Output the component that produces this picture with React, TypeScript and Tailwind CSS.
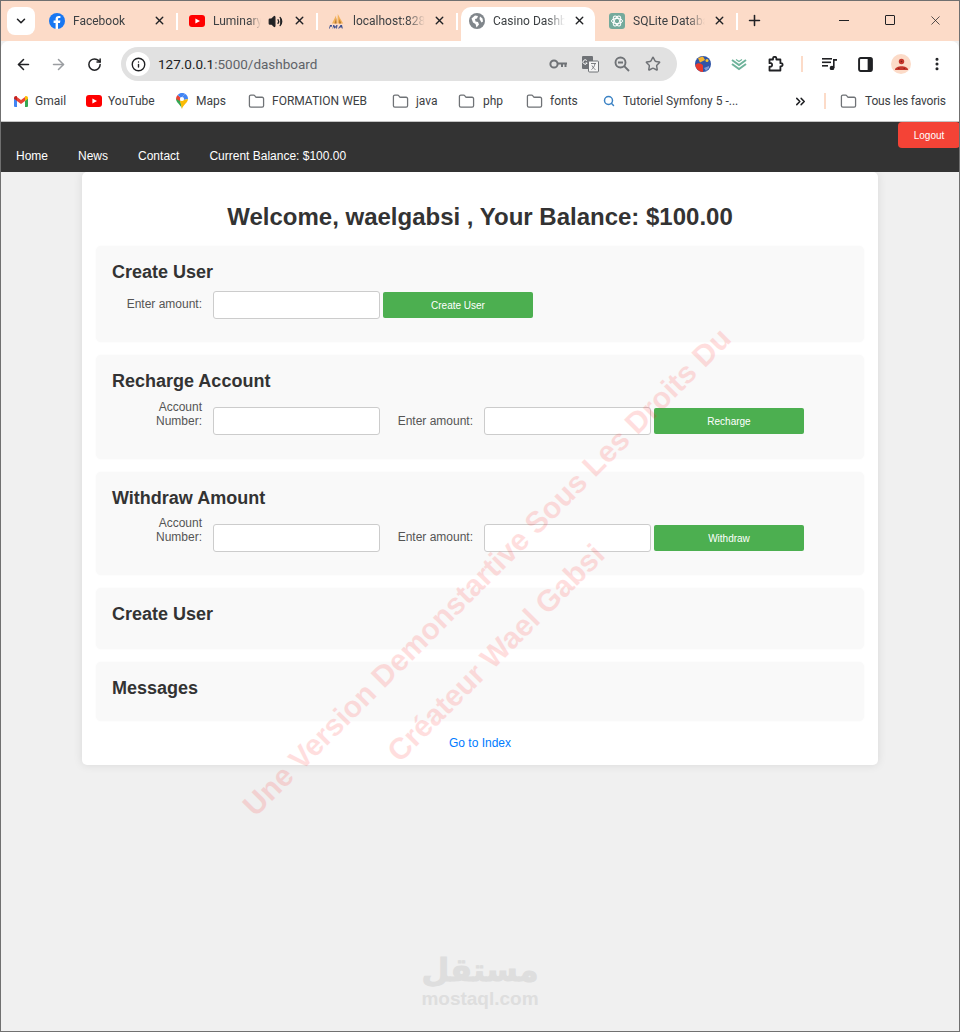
import {
  ArrowLeft,
  ArrowRight,
  ChevronDown,
  ChevronsRight,
  Folder,
  Info,
  MoreVertical,
  Plus,
  RotateCw,
  Search,
  Star,
  Volume2,
  X,
} from 'lucide-react';
import type { ReactNode } from 'react';

const FacebookIcon = () => (
  <svg viewBox="0 0 16 16" className="w-4 h-4 shrink-0">
    <circle cx="8" cy="8" r="8" fill="#1877f2" />
    <path d="M9 16V10h2l.4-2.4H9V6.3c0-.8.3-1.2 1.3-1.2h1.1V3c-.5-.1-1.2-.1-1.8-.1-1.900 0-3 1.100-3 3.100v1.600H4.600V10H6.600v6z" fill="#fff" />
  </svg>
);

const YoutubeIcon = () => (
  <svg viewBox="0 0 16 12" className="w-4 h-3 shrink-0">
    <rect width="16" height="12" rx="3" fill="#ff0000" />
    <path d="M6.400 3.400v5.200L11 6z" fill="#fff" />
  </svg>
);

const PmaIcon = () => (
  <svg viewBox="0 0 16 16" className="w-4 h-4 shrink-0">
    <path d="M3 10.500 7 2.500l.6 8zM8.400 10.500 8.800 1l2.400 4.500 3 5z" fill="#f2b15a" />
    <path d="M5.500 10.500 7.300 5l.3 5.500zM10 10.500l.5-4.500 1.800 4.500z" fill="#b5772d" />
    <path d="M0 15.500 1 12h2l-.2 1.800H1.200l-.2 1.700zM3.500 15.500 4.200 12h1l.9 1.800L7.500 12h1l-.5 3.500H7l.3-2-1.300 2h-.6l-1-2-.3 2zM9 15.500 11.500 12h1.500l.8 3.500h-1l-.2-.9h-1.700l-.7.9z" fill="#3d4f8f" />
  </svg>
);

const GlobeIcon = () => (
  <svg viewBox="0 0 16 16" className="w-4 h-4 shrink-0">
    <circle cx="8" cy="8" r="8" fill="#80868b" />
    <path d="M2.500 5.500 6 2.500l3 .5-1 2.500-2 .5.500 2.500L9 9l1 2.500-2.500 3L6.500 11 4 9.500zM11 3.500l2.500 2 .5 3-1.500 1-2-3.500z" fill="#fff" />
  </svg>
);

const ChatGptIcon = () => (
  <svg viewBox="0 0 16 16" className="w-4 h-4 shrink-0">
    <rect width="16" height="16" rx="3" fill="#74aa9c" />
    <g fill="none" stroke="#fff" strokeWidth="1">
      <ellipse cx="8" cy="8" rx="5.500" ry="2.600" />
      <ellipse cx="8" cy="8" rx="5.500" ry="2.600" transform="rotate(60 8 8)" />
      <ellipse cx="8" cy="8" rx="5.500" ry="2.600" transform="rotate(120 8 8)" />
    </g>
  </svg>
);

const GmailIcon = () => (
  <svg viewBox="0 0 14 11" className="w-[14px] h-[11px] shrink-0">
    <path d="M0 2v8a1 1 0 0 0 1 1h2V4.500z" fill="#4285f4" />
    <path d="M14 2v8a1 1 0 0 1-1 1h-2V4.500z" fill="#34a853" />
    <path d="M3 5V1L7 4l4-3v4L7 8z" fill="#ea4335" />
    <path d="M0 2c0-1.600 1.800-2.500 3-1.500V5L0 2.700z" fill="#c5221f" />
    <path d="M14 2c0-1.600-1.800-2.500-3-1.500V5l3-2.300z" fill="#fbbc04" />
  </svg>
);

const MapsIcon = () => (
  <svg viewBox="0 0 12 16" className="w-3 h-4 shrink-0">
    <path d="M6 16C5 12 0 9.500 0 6h4z" fill="#34a853" />
    <path d="M0 6c0-1.600.6-3 1.700-4.100L5 5 4 8z" fill="#ea4335" />
    <path d="M1.700 1.900A6 6 0 0 1 9 .800L5 5z" fill="#4285f4" />
    <path d="M9 .800A6 6 0 0 1 12 6L7.500 7 5 5z" fill="#4285f4" />
    <path d="M12 6c0 3.500-5 6-6 10L4 8l3.500-1z" fill="#fbbc04" />
    <circle cx="6" cy="6" r="2.100" fill="#fff" />
  </svg>
);

const KeyIcon = () => (
  <svg viewBox="0 0 18 12" className="w-[18px] h-3 shrink-0" fill="none" stroke="#6f7276" strokeWidth="2">
    <circle cx="5" cy="6" r="3.600" />
    <path d="M8.500 5.500H18M13 5.500V9M16.500 5.500V9" />
  </svg>
);

const TranslateIcon = () => (
  <svg viewBox="0 0 17 17" className="w-[17px] h-[17px] shrink-0">
    <rect x="0" y="0" width="11" height="13" rx="1" fill="#6f7276" />
    <rect x="6.500" y="5" width="10" height="11" rx="1" fill="#f5f5f5" stroke="#6f7276" />
    <path d="M4.800 4.500a2.200 2.200 0 1 0 .4 2.500H3.500" fill="none" stroke="#fff" strokeWidth="1" />
    <path d="M9 7.500h5M13 7.500c-.5 3-2 5-3.500 6M10 9.500c.7 1.800 2 3.300 3.500 4" fill="none" stroke="#6f7276" strokeWidth=".9" />
  </svg>
);

const ZoomIcon = () => (
  <svg viewBox="0 0 16 16" className="w-4 h-4 shrink-0" fill="none" stroke="#6f7276" strokeWidth="1.900">
    <circle cx="6.500" cy="6.500" r="5" />
    <path d="M4 6.500h5M10.200 10.200 15 15" />
  </svg>
);

const ExtensionIcon = () => (
  <svg viewBox="0 0 16 16" className="w-4 h-4 shrink-0">
    <circle cx="8" cy="8" r="8" fill="#2f55a8" />
    <path d="M.3 9c2-2.500 5.700-2.500 7.700.5V16a8 8 0 0 1-7.700-7z" fill="#e8382c" />
    <path d="M3 2 8 .5 10 4 5 6.500z" fill="#f4b430" />
    <circle cx="12" cy="4.500" r="1.500" fill="#f4c430" />
    <path d="M9 12l5-2v2l-3 3z" fill="#7a9ad8" />
  </svg>
);

const ChevronsExtIcon = () => (
  <svg viewBox="0 0 16 13" className="w-4 h-[13px] shrink-0" fill="none" stroke="#6fb39b" strokeWidth="2">
    <path d="m1 2 7 5 7-5" />
    <path d="m1 6 7 5 7-5" />
    <path d="M5 1.500 8 3.500l3-2" strokeWidth="1.200" />
  </svg>
);

const PuzzleIcon = () => (
  <svg viewBox="0 0 16 16" className="w-4 h-4 shrink-0" fill="none" stroke="#202124" strokeWidth="1.800" strokeLinejoin="round">
    <path d="M1.500 3.500H5V2.500a1.700 1.700 0 0 1 3.400 0v1h4v3.700h.6a1.600 1.600 0 0 1 0 3.200h-.6v4.100H1.500v-3.800H3a1.900 1.900 0 0 0 0-3.500H1.500z" />
  </svg>
);

const QueueIcon = () => (
  <svg viewBox="0 0 15 12" className="w-[15px] h-3 shrink-0" fill="#202124">
    <rect x="0" y="0" width="10" height="1.600" />
    <rect x="0" y="3.500" width="9" height="1.600" />
    <rect x="0" y="7" width="6" height="1.600" />
    <rect x="11" y="1" width="1.600" height="9" />
    <rect x="11" y="1" width="4" height="1.800" />
    <circle cx="10" cy="10" r="2.300" />
  </svg>
);

const SidePanelIcon = () => (
  <svg viewBox="0 0 14 14" className="w-[15px] h-[15px] shrink-0">
    <rect x="1" y="1" width="12" height="12" rx="1.500" fill="#fff" stroke="#202124" strokeWidth="1.800" />
    <rect x="9" y="1" width="4" height="12" fill="#202124" />
  </svg>
);

const AvatarIcon = () => (
  <div className="w-5 h-5 rounded-full bg-[#fcdbc8] flex items-center justify-center shrink-0">
    <svg viewBox="0 0 12 12" className="w-[13px] h-[13px]">
      <circle cx="6" cy="3.200" r="2.500" fill="#c5372c" />
      <path d="M0 11c0-2.500 3-3.500 6-3.500s6 1 6 3.500z" fill="#c5372c" />
      <circle cx="6" cy="3.200" r=".7" fill="#7a1f18" />
      <circle cx="3.500" cy="9.500" r=".6" fill="#7a1f18" />
      <circle cx="8.500" cy="9.500" r=".6" fill="#7a1f18" />
    </svg>
  </div>
);

type TabItem = { title: string; icon: ReactNode; active?: boolean; sound?: boolean };

const tabs: TabItem[] = [
  { title: 'Facebook', icon: <FacebookIcon /> },
  { title: 'Luminary', icon: <YoutubeIcon />, sound: true },
  { title: 'localhost:8282', icon: <PmaIcon /> },
  { title: 'Casino Dashboard', icon: <GlobeIcon />, active: true },
  { title: 'SQLite Database', icon: <ChatGptIcon /> },
];

const folderIcon = <Folder size={17} strokeWidth={1.8} className="text-[#6f7276] shrink-0" />;

const bookmarks = [
  { label: 'Gmail', icon: <GmailIcon />, width: 'w-[72px]', gap: 'gap-[7px]' },
  { label: 'YouTube', icon: <YoutubeIcon />, width: 'w-[90px]', gap: 'gap-[6px]' },
  { label: 'Maps', icon: <MapsIcon />, width: 'w-[72px]', gap: 'gap-[8px]' },
  { label: 'FORMATION WEB', icon: folderIcon, width: 'w-[144px]', gap: 'gap-[7px]' },
  { label: 'java', icon: folderIcon, width: 'w-[66px]', gap: 'gap-[7px]' },
  { label: 'php', icon: folderIcon, width: 'w-[68px]', gap: 'gap-[8px]' },
  { label: 'fonts', icon: folderIcon, width: 'w-[77px]', gap: 'gap-[7px]' },
  { label: 'Tutoriel Symfony 5 -...', icon: <Search size={12} strokeWidth={3} className="text-[#3b82c4] shrink-0" />, width: 'w-[190px]', gap: 'gap-[8px]' },
];

const Tab = ({ tab }: { tab: TabItem }) => (
  <div className="relative w-[140px] h-[34px] shrink-0 pl-[12px]">
    {tab.active && <div className="absolute left-[4px] right-[2px] top-0 bottom-0 bg-white rounded-t-[10px]" />}
    <div className="relative flex items-center gap-[8px] w-[120px] h-[28px]">
      {tab.icon}
      <span className={`text-[12px] text-[#3c4043] whitespace-nowrap overflow-hidden [mask-image:linear-gradient(to_right,black_75%,transparent)] ${tab.sound ? 'w-[48px]' : 'w-[72px]'}`}>
        {tab.title}
      </span>
      {tab.sound && <Volume2 size={15} fill="#202124" className="text-[#202124] shrink-0 ml-[-1px]" />}
    </div>
    <X size={13} strokeWidth={2.6} className="absolute left-[116px] top-[7px] text-[#202124]" />
    {!tab.active && <div className="absolute right-[-1px] top-[6px] w-[2px] h-[17px] bg-white" />}
  </div>
);

const ChromeBar = () => (
  <div className="shrink-0 font-['Roboto',sans-serif]">
    {/* tabs */}
    <div className="h-[40px] bg-[#fcdbc8] flex items-start pt-[6px] pl-[6px]">
      <div className="w-[28px] h-[28px] bg-white rounded-[8px] flex items-center justify-center shrink-0 mr-[2px]">
        <ChevronDown size={14} strokeWidth={2.6} className="text-[#202124]" />
      </div>
      {tabs.map((tab) => (
        <Tab key={tab.title} tab={tab} />
      ))}
      <Plus size={17} strokeWidth={2.2} className="text-[#202124] mt-[5px] ml-[9px] shrink-0" />
      <div className="flex ml-auto items-center h-[28px] mt-[-1px] text-[#202124]">
        <div className="w-[10px] h-[1px] bg-[#202124] mr-[36px]" />
        <div className="w-[10px] h-[10px] border border-[#202124] rounded-[1px] mr-[33px]" />
        <X size={15} strokeWidth={1.2} className="mr-[16px]" />
      </div>
    </div>
    {/* toolbar */}
    <div className="h-[40px] bg-white rounded-t-[8px] flex items-start pt-[6px] text-[#202124]">
      <div className="h-[34px] flex items-center">
        <ArrowLeft size={17} strokeWidth={2.2} className="ml-[14px] shrink-0" />
        <ArrowRight size={17} strokeWidth={2.2} className="ml-[18px] text-[#9a9da1] shrink-0" />
        <RotateCw size={15} strokeWidth={2.4} className="ml-[20px] shrink-0" />
      </div>
      <div className="ml-[19px] w-[556px] h-[34px] bg-[#e1e1e1] rounded-full flex items-center shrink-0">
        <div className="w-[24px] h-[24px] ml-[5px] bg-white rounded-full flex items-center justify-center shrink-0">
          <Info size={15} strokeWidth={2.2} />
        </div>
        <span className="ml-[8px] text-[13.5px] text-[#5f6368] whitespace-nowrap">
          <span className="text-[#202124]">127.0.0.1</span>:5000/dashboard
        </span>
        <div className="ml-auto flex items-center gap-[15px] pr-[16px] text-[#6f7276]">
          <KeyIcon />
          <TranslateIcon />
          <ZoomIcon />
          <Star size={16} strokeWidth={2.2} />
        </div>
      </div>
      <div className="ml-[18px] h-[34px] flex items-center">
        <ExtensionIcon />
        <div className="ml-[20px]"><ChevronsExtIcon /></div>
        <div className="ml-[21px]"><PuzzleIcon /></div>
        <div className="ml-[17px] w-[2px] h-[16px] bg-[#fcdbc8]" />
        <div className="ml-[19px]"><QueueIcon /></div>
        <div className="ml-[21px]"><SidePanelIcon /></div>
        <div className="ml-[18px]"><AvatarIcon /></div>
        <MoreVertical size={16} strokeWidth={2.6} className="ml-[18px]" />
      </div>
    </div>
    {/* bookmarks */}
    <div className="h-[41px] bg-white border-b border-[#c4c4c4] flex items-center pl-[13px] text-[12px] text-[#3c4043]">
      {bookmarks.map((b) => (
        <div key={b.label} className={`flex items-center shrink-0 whitespace-nowrap ${b.width} ${b.gap}`}>
          {b.icon}
          <span>{b.label}</span>
        </div>
      ))}
      <ChevronsRight size={15} strokeWidth={2.4} className="text-[#202124] shrink-0" />
      <div className="ml-[16px] w-[2px] h-[16px] bg-[#fcdbc8] shrink-0" />
      <Folder size={17} strokeWidth={1.8} className="text-[#6f7276] ml-[14px] shrink-0" />
      <span className="ml-[8px] whitespace-nowrap tracking-[-0.2px]">Tous les favoris</span>
    </div>
  </div>
);

const Section = ({ title, className, children }: { title: string; className: string; children?: ReactNode }) => (
  <section className={`bg-[#f9f9f9] rounded-[5px] shadow-[0_0_2px_rgba(0,0,0,0.04)] px-[16px] pt-[16px] ${className}`}>
    <h2 className="text-[18px] leading-[21px] font-bold text-[#333333]">{title}</h2>
    {children}
  </section>
);

const Field = ({ label, className }: { label: ReactNode; className?: string }) => (
  <>
    <label className={`w-[90px] mr-[8px] text-right text-[12px] leading-[14px] text-[#555555] shrink-0 ${className ?? ''}`}>{label}</label>
    <input type="text" className="w-[167px] h-[28px] bg-white border border-[#cccccc] rounded-[3px] shrink-0" />
  </>
);

const GreenButton = ({ children }: { children: string }) => (
  <button className="w-[150px] h-[26px] bg-[#4caf50] text-white text-[10px] rounded-[2px] shrink-0">{children}</button>
);

const AccountLabel = () => (
  <>
    Account
    <br />
    Number:
  </>
);

export default function App() {
  return (
    <div className="relative w-[960px] h-[1032px] overflow-hidden border border-[#707070] bg-[#f0f0f0] font-['Liberation_Sans',Arial,sans-serif]">
      <ChromeBar />

      <nav className="relative h-[50px] bg-[#333333] flex items-end text-[12px] text-white pb-[7px] pl-[15px]">
        <a className="mr-[30px]">Home</a>
        <a className="mr-[30px]">News</a>
        <a className="mr-[30px]">Contact</a>
        <a>Current Balance: $100.00</a>
        <button className="absolute right-[-1px] top-0 w-[62px] h-[26px] bg-[#f44336] rounded-[4px] text-[10px] text-white">Logout</button>
      </nav>

      <main className="ml-[81px] w-[796px] h-[593px] bg-white rounded-[5px] shadow-[0_0_10px_rgba(0,0,0,0.1)] px-[14px]">
        <h1 className="pt-[31px] pb-[15px] text-center text-[24px] leading-[28px] font-bold text-[#333333]">
          Welcome, waelgabsi , Your Balance: $100.00
        </h1>
        <div className="flex flex-col gap-[13px]">
          <Section title="Create User" className="h-[96px]">
            <div className="flex items-center mt-[8px] gap-[3px]">
              <Field label="Enter amount:" className="mb-[2px]" />
              <GreenButton>Create User</GreenButton>
            </div>
          </Section>
          <Section title="Recharge Account" className="h-[104px]">
            <div className="flex items-center mt-[15px] gap-[3px]">
              <Field label={<AccountLabel />} className="mt-[-14px]" />
              <Field label="Enter amount:" />
              <GreenButton>Recharge</GreenButton>
            </div>
          </Section>
          <Section title="Withdraw Amount" className="h-[103px]">
            <div className="flex items-center mt-[15px] gap-[3px]">
              <Field label={<AccountLabel />} className="mt-[-16px]" />
              <Field label="Enter amount:" className="mb-[2px]" />
              <GreenButton>Withdraw</GreenButton>
            </div>
          </Section>
          <Section title="Create User" className="h-[61px]" />
          <Section title="Messages" className="h-[59px]" />
        </div>
        <div className="mt-[15px] text-center text-[12px] leading-[14px] text-[#007bff]">
          <a>Go to Index</a>
        </div>
      </main>

      {/* filigrane */}
      <span className="absolute left-[486px] top-[571px] -translate-x-1/2 -translate-y-1/2 -rotate-45 whitespace-nowrap text-[30px] leading-none font-bold text-[#ff0000]/[0.13] pointer-events-none">
        Une Version Demonstartive Sous Les Droits Du
      </span>
      <span className="absolute left-[495px] top-[652px] -translate-x-1/2 -translate-y-1/2 -rotate-45 whitespace-nowrap text-[30px] leading-none font-bold text-[#ff0000]/[0.13] pointer-events-none">
        Créateur Wael Gabsi
      </span>

      {/* logo mostaql */}
      <div className="absolute left-[420px] top-[950px] w-[118px] flex flex-col items-center text-[#dedede] pointer-events-none">
        <span className="text-[32px] leading-[38px] font-bold font-['DejaVu_Sans',sans-serif] [-webkit-text-stroke:1px_#dedede]">مستقل</span>
        <span className="text-[19px] leading-[20px] font-bold">mostaql.com</span>
      </div>
    </div>
  );
}
